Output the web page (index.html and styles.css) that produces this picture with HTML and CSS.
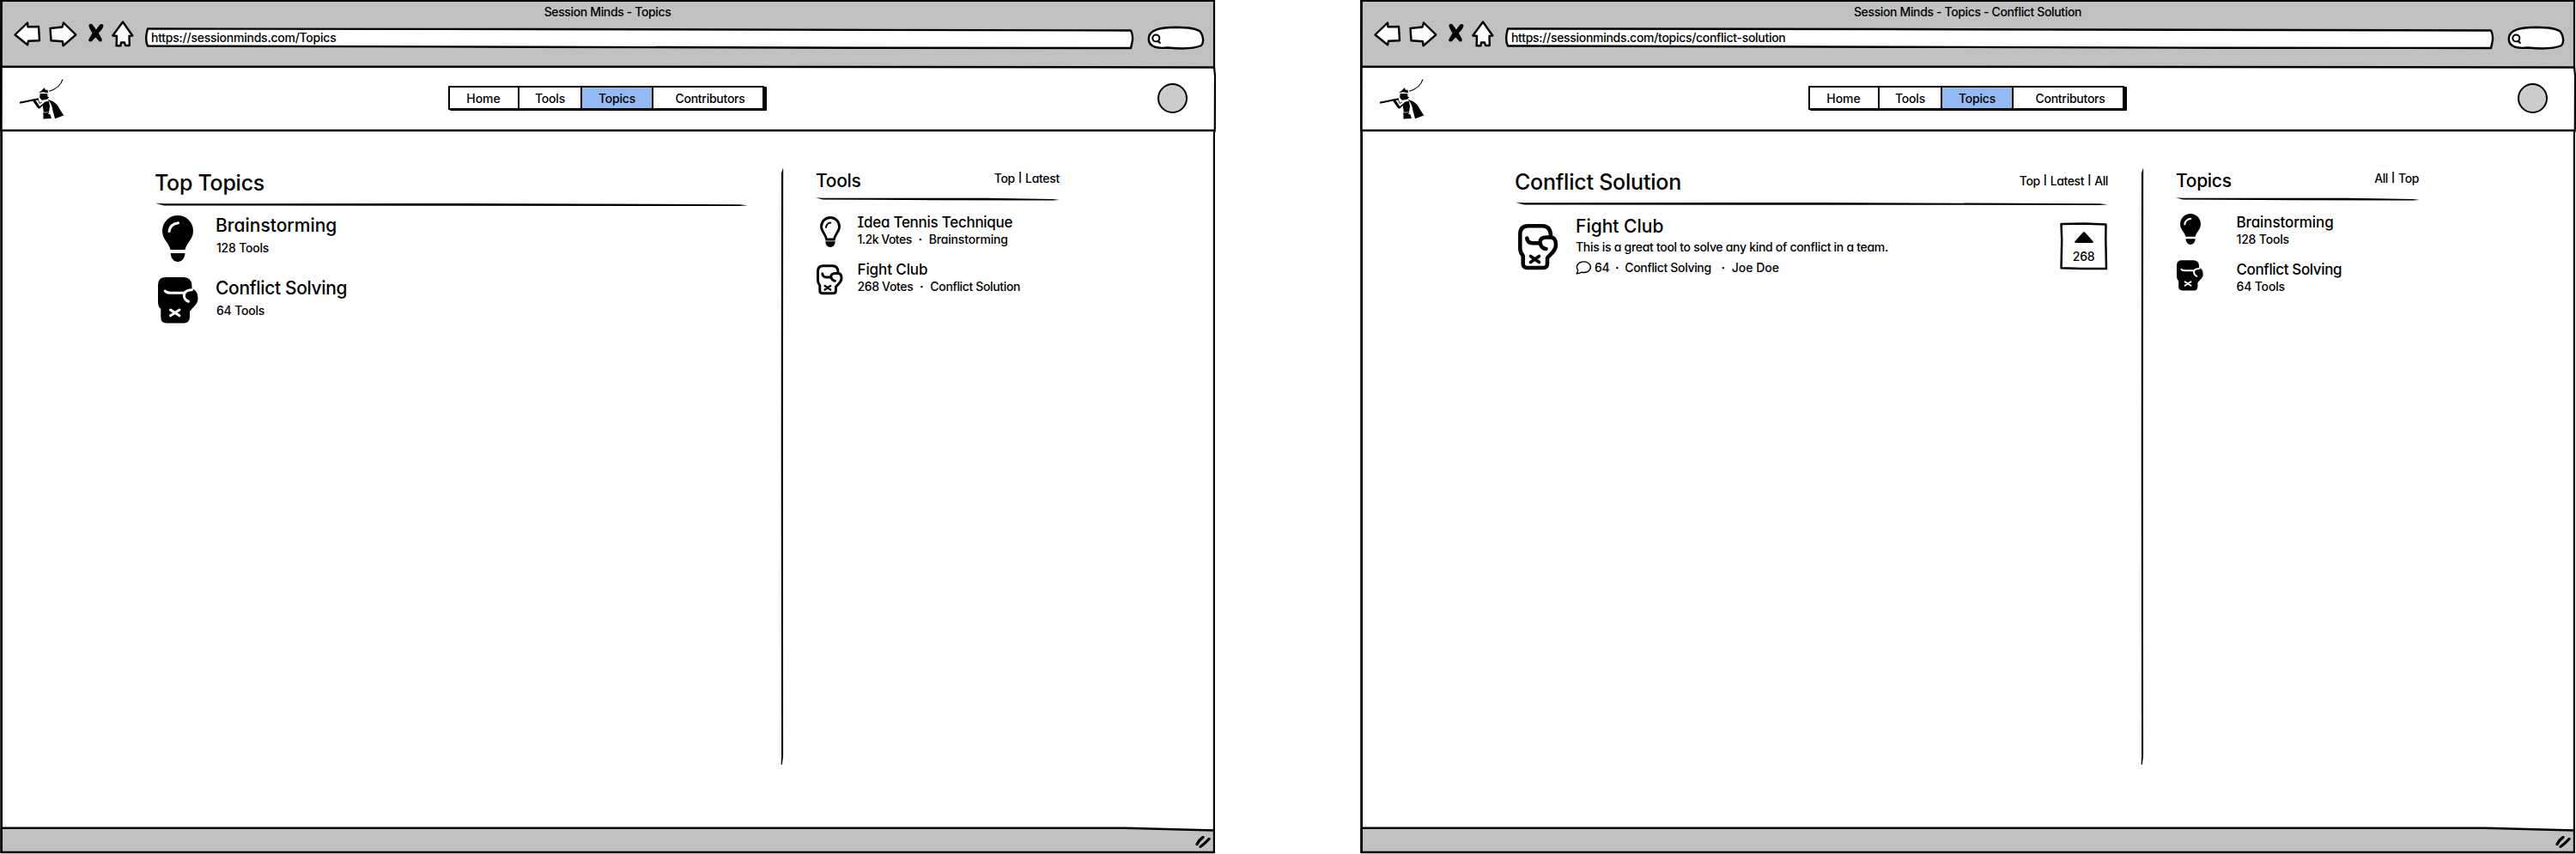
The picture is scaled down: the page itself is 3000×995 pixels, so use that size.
FILE: index.html
```html
<!DOCTYPE html>
<html lang="en">
<head>
<meta charset="utf-8">
<title>Session Minds</title>
<link rel="stylesheet" href="styles.css">
</head>
<body>
<svg class="defs" aria-hidden="true">
  <symbol id="bulb-solid" viewBox="0 0 36 54">
    <path d="M18 0A18 18 0 0 1 36 18C36 28 28.500 31 26.500 40H9.500C7.500 31 0 28 0 18A18 18 0 0 1 18 0Z"/>
    <path d="M9.800 44H26.400C26.400 50 22.500 54 18 54S9.800 50 9.800 44Z"/>
    <path d="M8 18.500Q9 10 18.500 8.700" fill="none" stroke="#fff" stroke-width="3" stroke-linecap="round"/>
  </symbol>
  <symbol id="bulb-line" viewBox="0 0 24 36">
    <path d="M12 1.500A10.500 10.500 0 0 1 22.500 12C22.500 18 17.500 20.500 16.300 27H7.700C6.500 20.500 1.500 18 1.500 12A10.500 10.500 0 0 1 12 1.500Z" fill="none" stroke="#000" stroke-width="2.800"/>
    <path d="M6.300 29.300H17.700C17.700 33.500 15 36 12 36S6.300 33.500 6.300 29.300Z"/>
    <path d="M7 13Q7.500 8 12.300 7.500" fill="none" stroke="#000" stroke-width="1.900" stroke-linecap="round"/>
  </symbol>
  <symbol id="glove-solid" viewBox="0 0 47 54">
    <path d="M9 0H30Q39 0 39.500 10V13.500C44 14.500 46.500 19 46.500 24.500C46.500 32 41 34 37 40V47Q36.500 53.500 30 53.500H10Q3.300 53.500 3.300 46.500V37Q0 34 0 29V9Q0 0 9 0Z"/>
    <g fill="none" stroke="#fff" stroke-width="3" stroke-linecap="round">
      <path d="M8.300 16Q10 18.300 15 18.300H31"/>
      <path d="M39.500 14.800C33 14.500 29.500 18 30.500 23Q31.500 27 35.500 28.300"/>
      <path d="M14.500 38L25 44.800M25 38L14.500 44.800"/>
    </g>
  </symbol>
  <symbol id="glove-line" viewBox="0 0 47 54">
    <g fill="none" stroke="#000" stroke-width="4.500" stroke-linecap="round" stroke-linejoin="round">
      <path d="M38 15.500V13Q37.500 2.500 28.500 2.300H11.500Q2.300 2.500 2.300 12V28Q2.300 33 5.700 37V46Q5.700 51 10.500 51H29.500Q34 51 34 46V39.500C38 34 44 32 44 24C44 19 42.500 15.800 38 15.500H33C27 15.500 25 19 25.500 22Q27 28.500 32.500 29"/>
      <path d="M10.300 16.500Q11 22.300 17 22.300H25"/>
      <path d="M14.500 37.500L24.500 44.500M24.500 37.500L14.500 44.500" stroke-width="3.600"/>
    </g>
  </symbol>
  <symbol id="rule-long" viewBox="0 0 690 5">
    <path d="M0 0.800L10 1.300L350 1L680 2.200L690 3.300L680 4L350 3.700L10 3.400Z"/>
  </symbol>
  <symbol id="rule-short" viewBox="0 0 284 5">
    <path d="M0 0.200L8 0.700L200 0.700L276 1.900L284 3L276 3.500L140 3.200L8 2.500Z"/>
  </symbol>
  <symbol id="divider" viewBox="0 0 4 695">
    <path d="M2.800 0L3.200 1L2.900 330L3.100 685L1.800 695L0.600 694.500L1 685L0.700 330L0.900 6Z"/>
  </symbol>
  <symbol id="piper" viewBox="22 90 54 50">
    <path d="M73 92.300Q70 102.500 57 106.300" fill="none" stroke="#000" stroke-width="1.100"/>
    <path d="M23 119.800L45 115.300" fill="none" stroke="#000" stroke-width="1.900"/>
    <path d="M51.600 102.300L48.500 105.500L45 108.300L50 107.300L56 108.300L55.300 104.500L53.300 105Z"/>
    <path d="M46.500 109L55.300 109.300L55.300 112.500L57.200 113.600L54.800 115.800L49 116.700L46.200 114Z"/>
    <path d="M37 115.500L41 116L46.300 124L52.500 118.500L57 117.800L58 124L57 130.500L50.800 130.700L49.800 123L46 126.800L43.500 125.500Z"/>
    <path d="M44.500 116L46 120.500L48.800 119" fill="none" stroke="#000" stroke-width="0.900"/>
    <path d="M50 131.500L57.500 131L56 132.500L58.500 133.500L60 138L50.300 138.600L50.500 134.500Z"/>
    <path d="M55.500 115.800L62 118.300L67 122.500L70 128L74.300 134.500L64 138.200L61.500 129Q60.500 121 55.500 115.800Z"/>
  </symbol>
  <symbol id="frame" viewBox="0 0 1416 995">
    <g fill="none" stroke="#000" stroke-width="2.500">
      <path d="M0 1H1415" stroke-width="2"/>
      <path d="M1.500 0L1.300 152L1.600 153V994" stroke-width="2.800"/>
      <path d="M1414 0V78L1415 88L1414.800 152L1413.900 155V994" stroke-width="2.200"/>
      <path d="M1 77.800H700L1414 78.400"/>
      <path d="M0 152H1415" stroke-width="2.300"/>
      <path d="M1 964.800H1310L1414 967.500"/>
      <path d="M1 993H1414"/>
    </g>
  </symbol>
  <symbol id="nav-icons" viewBox="16 24 152 34">
    <g fill="#fff" stroke="#000" stroke-width="2.400" stroke-linejoin="round">
      <path d="M17.500 40.500L32 26.500L32.500 31.300L45 31L46 47.300L33 47.800L32 52.200Z"/>
      <path d="M58.500 33L72.500 31.500L74 26.500L88.300 40.500L73.500 53.300L73 48.300L59.500 47.300Z"/>
      <path d="M143 25.500L154.300 41.500L150.500 42L150.800 53L146 53L145 49.500L141 49.500L140.500 53.300L135.600 53.300L136 42L131.300 41.500Z"/>
    </g>
    <path d="M103.500 29Q105.500 27 107.500 28.500L112 34.500L116 29Q119 26.800 120.500 29.500Q120.300 33 114.800 38.500L118.800 46Q119 49 116 48.500L111.300 43.500L107 48Q103.500 49.500 103 46.500L107.500 38.500Q103 32 103.500 29Z"/>
  </symbol>
  <symbol id="url-box" viewBox="168 24 1153 34">
    <path d="M172 33.500L620 34L1317 35.500Q1320.300 42 1318.300 50L1317 56L1000 55.700L620 54.700L172 53.500Q168.300 46 172 33.500Z" fill="#fff" stroke="#000" stroke-width="2.400" stroke-linejoin="round"/>
  </symbol>
  <symbol id="search-box" viewBox="1335 24 68 34">
    <path d="M1337.700 45C1338 34 1352 32 1370 31.800C1385 32 1393 33 1398 37C1402 43 1402 50 1399 53C1390 57 1375 57 1360 55.500C1350 56.500 1337.700 56 1337.700 45Z" fill="#fff" stroke="#000" stroke-width="2.400"/>
    <circle cx="1346.300" cy="44.500" r="4" fill="none" stroke="#000" stroke-width="2"/>
    <path d="M1348 47.500L1351.500 50.500" stroke="#000" stroke-width="2.200"/>
  </symbol>
  <symbol id="grip" viewBox="0 0 18 14">
    <path d="M2 9.500Q5 4 9 1.500M6 12.500Q11 9 16 3.500" fill="none" stroke="#000" stroke-width="3.300" stroke-linecap="round"/>
  </symbol>
</svg>

<section class="window">
  <header class="chrome">
    <div class="window-title">Session Minds - Topics</div>
    <div class="toolbar">
      <svg class="nav-icons"><use href="#nav-icons"/></svg>
      <div class="url"><svg class="url-box"><use href="#url-box"/></svg><span class="url-text">https://sessionminds.com/Topics</span></div>
      <svg class="search"><use href="#search-box"/></svg>
    </div>
  </header>
  <div class="site-header">
    <svg class="logo"><use href="#piper"/></svg>
    <nav class="tabs"><a class="tab home">Home</a><a class="tab tools">Tools</a><a class="tab topics active">Topics</a><a class="tab contributors">Contributors</a></nav>
    <div class="avatar"></div>
  </div>
  <div class="content">
    <main class="main">
      <div class="head"><h1 class="title snug">Top Topics</h1></div>
      <svg class="rule-long"><use href="#rule-long"/></svg>
      <div class="topics-list">
        <div class="topic"><div class="icon-cell"><svg class="bulb"><use href="#bulb-solid"/></svg></div>
          <div class="topic-text"><div class="name">Brainstorming</div><div class="meta">128 Tools</div></div></div>
        <div class="topic"><div class="icon-cell"><svg class="glove"><use href="#glove-solid"/></svg></div>
          <div class="topic-text"><div class="name tight">Conflict Solving</div><div class="meta">64 Tools</div></div></div>
      </div>
    </main>
    <svg class="divider"><use href="#divider"/></svg>
    <aside class="side">
      <div class="side-head"><h2 class="side-title">Tools</h2><div class="links"><a>Top</a><span class="bar">|</span><a>Latest</a></div></div>
      <svg class="rule-short"><use href="#rule-short"/></svg>
      <div class="side-list">
        <div class="side-row"><div class="side-icon"><svg class="bulb-sm bulb-line"><use href="#bulb-line"/></svg></div>
          <div><div class="side-name snug">Idea Tennis Technique</div><div class="side-meta"><span class="votes-k">1.2k Votes</span><span class="dot">·</span>Brainstorming</div></div></div>
        <div class="side-row"><div class="side-icon"><svg class="glove-sm glove-low"><use href="#glove-line"/></svg></div>
          <div><div class="side-name">Fight Club</div><div class="side-meta tight"><span>268 Votes</span><span class="dot">·</span>Conflict Solution</div></div></div>
      </div>
    </aside>
  </div>
  <footer class="status"><svg class="grip"><use href="#grip"/></svg></footer>
  <svg class="frame"><use href="#frame"/></svg>
</section>

<section class="window">
  <header class="chrome">
    <div class="window-title">Session Minds - Topics - Conflict Solution</div>
    <div class="toolbar">
      <svg class="nav-icons"><use href="#nav-icons"/></svg>
      <div class="url"><svg class="url-box"><use href="#url-box"/></svg><span class="url-text long">https://sessionminds.com/topics/conflict-solution</span></div>
      <svg class="search"><use href="#search-box"/></svg>
    </div>
  </header>
  <div class="site-header">
    <svg class="logo"><use href="#piper"/></svg>
    <nav class="tabs"><a class="tab home">Home</a><a class="tab tools">Tools</a><a class="tab topics active">Topics</a><a class="tab contributors">Contributors</a></nav>
    <div class="avatar"></div>
  </div>
  <div class="content">
    <main class="main raised">
      <div class="head"><h1 class="title">Conflict Solution</h1><div class="links main-links"><a>Top</a><span class="bar">|</span><a>Latest</a><span class="bar">|</span><a>All</a></div></div>
      <svg class="rule-long"><use href="#rule-long"/></svg>
      <article class="tool">
        <div class="tool-icon"><svg class="glove"><use href="#glove-line"/></svg></div>
        <div class="tool-text">
          <div class="name">Fight Club</div>
          <div class="desc">This is a great tool to solve any kind of conflict in a team.</div>
          <div class="tool-meta">
            <svg class="comment" viewBox="0 0 19 16"><path d="M2.600 10.500A8 6.300 0 1 1 7 13.200Q4 15 1 14.800Q2.800 13 2.600 10.500Z" fill="none" stroke="#000" stroke-width="1.400" stroke-linejoin="round"/></svg>
            <span class="count">64</span><span class="dot">·</span><span>Conflict Solving</span><span class="dot wide">·</span><span class="author">Joe Doe</span>
          </div>
        </div>
        <div class="vote">
          <svg class="vote-frame" viewBox="0 0 56 57"><path d="M1.500 2L28 1.500L53.500 2.500L53.300 20L54 54L25 54L1.500 53.300L2.200 20Z" fill="none" stroke="#000" stroke-width="2.500" stroke-linejoin="round"/></svg>
          <svg class="caret" viewBox="0 0 24 16"><path d="M12 2.500L21.500 12.800H2.500Z" stroke="#000" stroke-width="2.600" stroke-linejoin="round"/></svg>
          <span class="vote-count">268</span>
        </div>
      </article>
    </main>
    <svg class="divider"><use href="#divider"/></svg>
    <aside class="side">
      <div class="side-head"><h2 class="side-title">Topics</h2><div class="links all-top"><a>All</a><span class="bar">|</span><a>Top</a></div></div>
      <svg class="rule-short"><use href="#rule-short"/></svg>
      <div class="side-list wide-icons">
        <div class="side-row"><div class="side-icon"><svg class="bulb-sm"><use href="#bulb-solid"/></svg></div>
          <div><div class="side-name">Brainstorming</div><div class="side-meta">128 Tools</div></div></div>
        <div class="side-row"><div class="side-icon"><svg class="glove-sm"><use href="#glove-solid"/></svg></div>
          <div><div class="side-name tight">Conflict Solving</div><div class="side-meta">64 Tools</div></div></div>
      </div>
    </aside>
  </div>
  <footer class="status"><svg class="grip"><use href="#grip"/></svg></footer>
  <svg class="frame"><use href="#frame"/></svg>
</section>
</body>
</html>
```
FILE: styles.css
```css
* { box-sizing: border-box; }
body {
  margin: 0;
  display: flex;
  gap: 168px;
  width: 3000px;
  height: 995px;
  overflow: hidden;
  background: #fff;
  color: #000;
  font: 500 14px/20px Inter, "Open Sans", sans-serif;
}
svg { display: block; flex: none; }
h1, h2 { margin: 0; font-weight: 500; }
.defs { position: absolute; width: 0; height: 0; }

.window {
  position: relative;
  flex: none;
  width: 1416px;
  height: 995px;
  display: flex;
  flex-direction: column;
}
.frame { position: absolute; inset: 0; width: 1416px; height: 995px; pointer-events: none; }

/* browser chrome */
.chrome { height: 78px; margin-right: 2px; padding-top: 4px; background: #c1c1c1; }
.window-title { padding-left: 1px; text-align: center; letter-spacing: -0.36px; }
.toolbar { display: flex; padding-left: 16px; }
.nav-icons { width: 152px; height: 34px; }
.url { position: relative; width: 1153px; height: 34px; padding: 10px 0 0 8px; line-height: 20px; }
.url-box { position: absolute; inset: 0; width: 1153px; height: 34px; }
.url-text { position: relative; letter-spacing: -0.24px; }
.url-text.long { letter-spacing: -0.3px; }
.search { width: 68px; height: 34px; margin-left: 14px; }

/* site header */
.site-header { display: flex; height: 75px; padding: 12px 0 0 22px; }
.logo { width: 54px; height: 50px; }
.tabs {
  display: flex;
  width: 368px;
  height: 28px;
  margin: 10px 0 0 446px;
  border: 2px solid #000;
  border-radius: 1px;
  box-shadow: 3px 1px 0 #000, 2px 1px 0 #000;
}
.tab { text-align: center; line-height: 25px; letter-spacing: -0.2px; border-right: 2px solid #000; }
.tab:last-child { border-right: 0; }
.tab.home { width: 81px; letter-spacing: 0; padding-right: 1px; }
.tab.tools { width: 73px; }
.tab.topics { width: 83px; }
.tab.contributors { flex: 1; padding-left: 5px; letter-spacing: -0.25px; }
.tab.active { background: #94baf3; }
.avatar { width: 35px; height: 35px; margin: 7px 0 0 458px; border: 2px solid #000; border-radius: 50%; background: #ccc; }

/* page content */
.content { display: flex; flex: 1; padding-left: 181px; font-feature-settings: "cv11", "cv08"; }
.main { width: 690px; padding-top: 45px; }
.main.raised { padding-top: 44px; }
.head { display: flex; justify-content: space-between; height: 38px; }
.title { margin-left: -1px; font-size: 25px; line-height: 30px; letter-spacing: -0.22px; }
.rule-long { width: 690px; height: 5px; }
.topics-list { padding-top: 8px; }
.topic { display: flex; height: 73px; }
.icon-cell { width: 70px; }
.topic-text { padding-top: 1px; }
.bulb { width: 36px; height: 54px; margin: 2px 0 0 8px; }
.glove { width: 47px; height: 54px; margin: 1px 0 0 3px; }
.name { font-size: 21px; line-height: 26px; }
.meta { margin-top: 3px; padding-left: 1px; letter-spacing: -0.2px; }
.snug { letter-spacing: -0.27px; }
.tight { letter-spacing: -0.35px; }

.divider { width: 4px; height: 695px; margin: 43px 0 0 38px; }

.links { display: flex; gap: 4px; letter-spacing: -0.3px; }
.bar { font-size: 11px; line-height: 19px; letter-spacing: 0; font-weight: 700; }
.main-links { padding-top: 4px; letter-spacing: -0.4px; }
.all-top { padding-right: 1px; letter-spacing: -0.4px; }

.side { width: 284px; margin-left: 37px; padding-top: 44px; }
.side-head { display: flex; justify-content: space-between; height: 33px; padding-top: 1px; }
.side-title { font-size: 21px; line-height: 26px; letter-spacing: -0.3px; }
.rule-short { width: 284px; height: 5px; }
.side-list { padding-top: 13px; }
.side-row { display: flex; height: 55px; }
.side-icon { width: 48.500px; }
.bulb-sm { width: 24px; height: 36px; margin: 1px 0 0 5px; }
.bulb-sm.bulb-line { margin-top: 4px; }
.glove-sm { width: 31px; height: 36px; margin: 0 0 0 1px; }
.glove-sm.glove-low { margin-top: 5px; }
.side-name { font-size: 17px; line-height: 22px; letter-spacing: -0.1px; }
.side-name.snug { letter-spacing: -0.27px; }
.side-name.tight { letter-spacing: -0.37px; }
.side-meta { margin-top: -1px; letter-spacing: -0.17px; white-space: nowrap; }
.side-meta.tight { letter-spacing: -0.35px; }
.votes-k { letter-spacing: -0.500px; }
.dot { display: inline-block; width: 20px; text-align: center; font-weight: 700; letter-spacing: 0; }
.wide-icons .side-icon { width: 70.500px; }

/* tool entry */
.tool { display: flex; padding-top: 9px; }
.tool-icon { width: 70px; padding-top: 11px; }
.tool-text { width: 565px; padding-top: 2px; }
.desc { margin-top: 1px; letter-spacing: -0.3px; }
.tool-meta { display: flex; align-items: flex-start; margin-top: 4px; letter-spacing: -0.34px; }
.comment { width: 19px; height: 16px; margin: 2px 3px 0 0; }
.tool-meta .dot { width: 18px; }
.tool-meta .dot.wide { width: 20px; margin-left: 4px; }
.author { letter-spacing: 0; }
.vote { position: relative; display: flex; flex-direction: column; align-items: center; width: 56px; height: 57px; margin: 10px 0 0 -1px; padding: 10px 1px 0 0; }
.vote-frame { position: absolute; inset: 0; width: 56px; height: 57px; }
.caret { width: 24px; height: 16px; }
.vote-count { margin-top: 4px; letter-spacing: -0.3px; }

/* status bar */
.status { display: flex; justify-content: flex-end; height: 30px; padding: 9px 4px 0 0; margin-right: 2px; background: #c1c1c1; clip-path: polygon(0 0, 92% 0, 100% 2px, 100% 29px, 0 29px); }
.grip { width: 18px; height: 14px; }
```
